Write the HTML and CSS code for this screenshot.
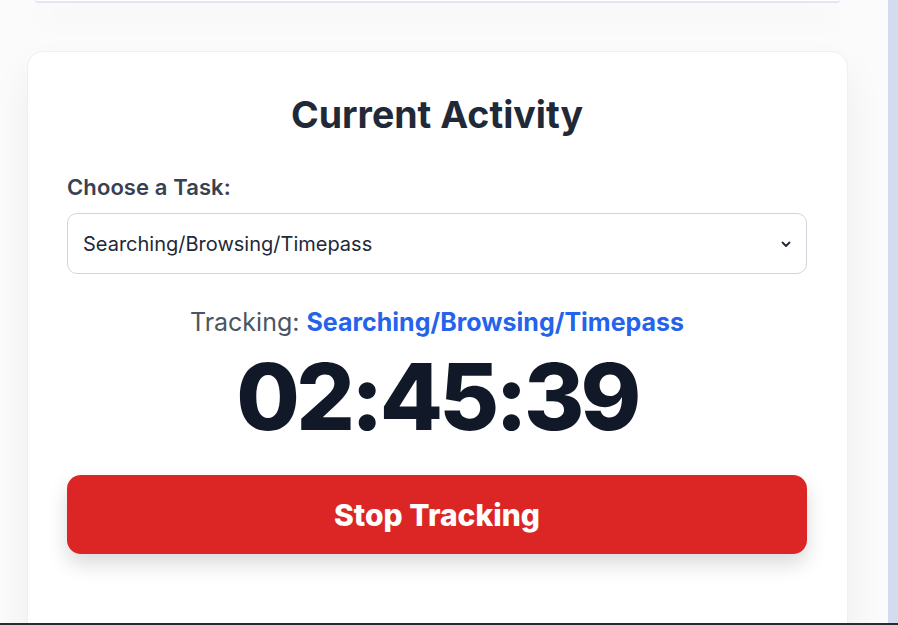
FILE: index.html
```html
<!DOCTYPE html>
<html>
<head>
<meta charset="utf-8">
<link rel="stylesheet" href="styles.css">
</head>
<body>
<div class="page">
  <main class="main">
    <div class="prev-card"></div>
    <section class="card">
      <h2 class="title">Current Activity</h2>
      <label class="label" for="task">Choose a Task:</label>
      <div class="select">
        <span>Searching/Browsing/Timepass</span>
        <svg class="chev" width="12" height="12" viewBox="0 0 12 12"><path d="M2.5 4.5 L6 8 L9.5 4.5" fill="none" stroke="#1f2937" stroke-width="1.8" stroke-linecap="round" stroke-linejoin="round"/></svg>
      </div>
      <p class="tracking">Tracking: <strong>Searching/Browsing/Timepass</strong></p>
      <div class="timer">02:45:39</div>
      <button class="stop">Stop Tracking</button>
    </section>
  </main>
  <div class="strip"></div>
</div>
<div class="bottom-line"></div>
</body>
</html>
```
FILE: styles.css
```css
* { box-sizing: border-box; }
html, body { margin: 0; padding: 0; height: 625px; overflow: hidden; }
body { font-family: Inter, "Noto Sans", sans-serif; background: #fafafa; display: flex; flex-direction: column; }
.page { display: flex; height: 623px; }
.main { width: 888px; background: #fbfbfb; padding: 0 40px 0 27px; overflow: hidden; }
.strip { width: 10px; background: #d3dbef; }
.bottom-line { height: 2px; background: #2b2b2b; }
.prev-card { height: 3px; margin: 0 8px 48px 8px; background: #ffffff; border-bottom: 2px solid #e3e4f5; border-radius: 0 0 14px 14px; box-shadow: 0 14px 30px rgba(0,0,0,0.11); }
.card { width: 821px; height: 620px; background: #fff; border: 1px solid #efefef; border-radius: 16px; padding: 38px 40px 0 39px; box-shadow: 0 20px 40px rgba(0,0,0,0.06); display: flex; flex-direction: column; }
.title { margin: 0; text-align: center; font-size: 37.5px; line-height: 50px; font-weight: 700; color: #1f2937; }
.label { margin-top: 33px; font-size: 22px; line-height: 28px; font-weight: 600; color: #374151; letter-spacing: 0.1px; }
.select { margin-top: 12px; height: 61px; border: 1px solid #d1d5db; border-radius: 10px; display: flex; align-items: center; justify-content: space-between; padding: 0 14px 0 15px; font-size: 20px; color: #1f2937; }
.tracking { margin: 32px 0 0; text-align: center; font-size: 25px; line-height: 32px; color: #4b5563; }
.tracking strong { color: #2563eb; font-weight: 700; }
.timer { text-align: center; font-size: 92px; line-height: 92px; font-weight: 800; color: #111827; margin-top: 13px; letter-spacing: -3.8px; }
.stop { margin-top: 32px; height: 79px; border: none; border-radius: 14px; background: #dc2626; color: #fff; font-family: inherit; font-size: 30px; font-weight: 800; box-shadow: 0 10px 20px rgba(0,0,0,0.15); }
```
